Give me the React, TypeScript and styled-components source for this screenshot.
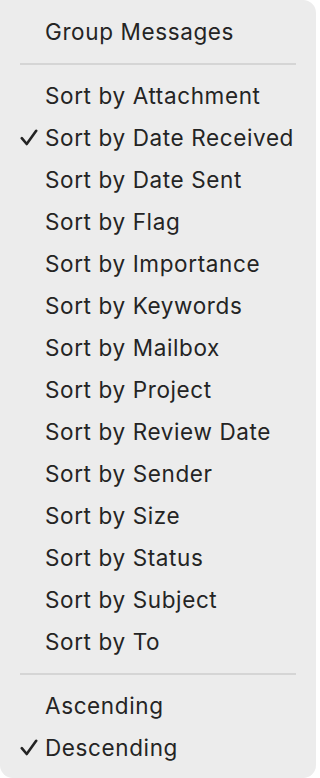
import styled, { createGlobalStyle } from 'styled-components';

const GlobalStyle = createGlobalStyle`
  html, body {
    margin: 0;
    padding: 0;
    background: #ffffff;
  }
`;

const Menu = styled.div`
  width: 316px;
  height: 778px;
  box-sizing: border-box;
  background: #ececec;
  border-radius: 0 13px 13px 13px;
  padding: 11px 0 9px;
  display: flex;
  flex-direction: column;
  font-family: Inter, 'Liberation Sans', sans-serif;
  color: #242424;
`;

const Item = styled.div`
  height: 42px;
  box-sizing: border-box;
  padding-bottom: 2px;
  display: flex;
  align-items: center;
  font-size: 22.5px;
  letter-spacing: 0.62px;
  white-space: nowrap;
`;

const CheckSlot = styled.div`
  width: 45px;
  display: flex;
  justify-content: flex-end;
  padding-right: 7px;
  box-sizing: border-box;
`;

const Separator = styled.div`
  height: 22px;
  display: flex;
  align-items: center;
  padding: 0 20px;

  &::after {
    content: '';
    flex: 1;
    height: 1.5px;
    background: #d5d5d5;
  }
`;

const Check = () => (
  <svg width="18" height="17" viewBox="0 0 18 17">
    <path
      d="M1.8 9.2 L6.7 15 L16.2 1.8"
      fill="none"
      stroke="#242424"
      strokeWidth="2.6"
      strokeLinecap="round"
      strokeLinejoin="round"
    />
  </svg>
);

type MenuItemProps = { label: string; checked?: boolean };

const MenuItem = ({ label, checked }: MenuItemProps) => (
  <Item>
    <CheckSlot>{checked && <Check />}</CheckSlot>
    {label}
  </Item>
);

const sortItems = [
  'Sort by Attachment',
  'Sort by Date Received',
  'Sort by Date Sent',
  'Sort by Flag',
  'Sort by Importance',
  'Sort by Keywords',
  'Sort by Mailbox',
  'Sort by Project',
  'Sort by Review Date',
  'Sort by Sender',
  'Sort by Size',
  'Sort by Status',
  'Sort by Subject',
  'Sort by To',
];

const App = () => (
  <>
    <GlobalStyle />
    <Menu>
      <MenuItem label="Group Messages" />
      <Separator />
      {sortItems.map((label) => (
        <MenuItem key={label} label={label} checked={label === 'Sort by Date Received'} />
      ))}
      <Separator />
      <MenuItem label="Ascending" />
      <MenuItem label="Descending" checked />
    </Menu>
  </>
);

export default App;
